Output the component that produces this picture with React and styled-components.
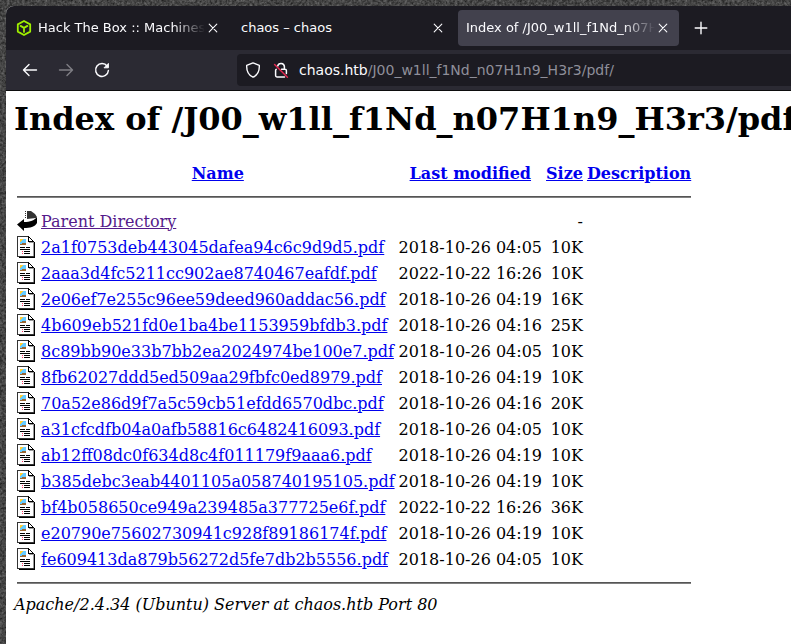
import React from "react";
import styled, { createGlobalStyle } from "styled-components";

const grain =
  "url(\"data:image/svg+xml,%3Csvg xmlns='http://www.w3.org/2000/svg' width='800' height='650'%3E%3Cfilter id='n' x='0' y='0' width='100%25' height='100%25' color-interpolation-filters='sRGB'%3E%3CfeTurbulence type='fractalNoise' baseFrequency='0.4' numOctaves='3' seed='4'/%3E%3CfeColorMatrix values='.4 0 0 0 .07 .4 0 0 0 .07 .4 0 0 0 .07 0 0 0 0 1'/%3E%3C/filter%3E%3Crect width='800' height='650' filter='url(%23n)'/%3E%3C/svg%3E\")";

const GlobalStyle = createGlobalStyle`
  *, *::before, *::after { box-sizing: border-box; }
  body { margin: 0; background: #464646 ${grain}; }
`;

const Desktop = styled.div`
  display: flex;
  min-height: 100vh;
  padding: 6px 0 0 6px;
  overflow: hidden;
`;

const Browser = styled.div`
  flex: 1;
  min-width: 0;
  display: flex;
  flex-direction: column;
  border-top-left-radius: 8px;
  overflow: hidden;
  background: #fff;
  color: #fbfbfe;
  font-family: "DejaVu Sans", sans-serif;
`;

const TabStrip = styled.div`
  display: flex;
  align-items: center;
  height: 44px;
  gap: 4px;
  padding-left: 2px;
  background: #1c1b22;
`;

const Tab = styled.div`
  display: flex;
  align-items: center;
  width: 221px;
  height: 36px;
  padding: 0 8px;
  border-radius: 4px;
  background: ${(p) => (p.$active ? "#42414d" : "transparent")};
`;

const TabLabel = styled.button`
  flex: 1;
  min-width: 0;
  display: flex;
  align-items: center;
  gap: 6px;
  height: 100%;
  padding: 0;
  border: 0;
  background: none;
  color: inherit;
  font: 13px/20px "DejaVu Sans", sans-serif;
  text-align: left;
  white-space: nowrap;
  overflow: hidden;
  mask-image: ${(p) =>
    p.$fade ? "linear-gradient(to left, transparent, #000 32px)" : "none"};
`;

const IconButton = styled.button`
  display: grid;
  place-items: center;
  flex: none;
  width: ${(p) => p.$size}px;
  height: ${(p) => p.$size}px;
  padding: 0;
  border: 0;
  background: none;
  color: inherit;

  &:disabled { opacity: 0.4; }
`;

const Toolbar = styled.div`
  display: flex;
  align-items: center;
  height: 41px;
  padding-left: 6px;
  border-bottom: 1px solid #0c0c0d;
  background: #2b2a33;
`;

const NavButtons = styled.div`
  display: flex;
  flex: none;
  width: 225px;
`;

const AddressBar = styled.div`
  flex: 1;
  min-width: 0;
  display: flex;
  align-items: center;
  height: 32px;
  padding-left: 2px;
  border-radius: 4px 0 0 4px;
  background: #1c1b22;
`;

const Url = styled.a`
  padding-left: 4px;
  color: #8f8f9a;
  font-size: 14px;
  line-height: 20px;
  text-decoration: none;
  white-space: nowrap;
`;

const Host = styled.span`
  color: #fbfbfe;
`;

const Page = styled.main`
  flex: 1;
  padding: 8px;
  overflow: hidden;
  color: #000;
  font: 16px/19px "DejaVu Serif", serif;
`;

const Title = styled.h1`
  margin: 0 0 19px;
  font-size: 32px;
  line-height: 41px;
  white-space: nowrap;
`;

const Listing = styled.table`
  border-spacing: 2px;
  white-space: nowrap;
`;

const Cell = styled.td`
  height: ${(p) => (p.$rule ? "auto" : "24px")};
  padding: 1px;
  text-align: ${(p) => (p.$end ? "right" : "left")};
  line-height: ${(p) => (p.$rule ? 0 : "19px")};
`;

const HeadCell = styled.th`
  height: 24px;
  padding: 1px;
`;

const Rule = styled.hr`
  height: 2px;
  margin: 8px 0;
  border: 0;
  border-top: 1px solid #555;
  border-bottom: 1px solid #808080;
`;

const Link = styled.a`
  color: ${(p) => (p.$visited ? "#551a8b" : "#0000ee")};
  text-decoration: underline;
`;

const Footer = styled.address`
  font-style: italic;
`;

const Glyph = styled.svg`
  display: block;
  flex: none;
`;

const CubeIcon = () => (
  <Glyph width="16" height="16" viewBox="0 0 16 16" fill="none" stroke="#9fef00" strokeWidth="1.8" strokeLinejoin="round" strokeLinecap="round">
    <path d="M8 1 14.200 4.400v7.200L8 15l-6.200-3.400V4.400zM4.600 5.900 8 7.900l3.400-2M8 7.900v4" />
  </Glyph>
);

const CloseIcon = () => (
  <Glyph width="10" height="10" viewBox="0 0 10 10" stroke="currentColor" strokeWidth="1.1" strokeLinecap="round">
    <path d="m1.200 1.200 7.600 7.600m0-7.600L1.200 8.800" />
  </Glyph>
);

const PlusIcon = () => (
  <Glyph width="14" height="14" viewBox="0 0 14 14" stroke="currentColor" strokeWidth="1.4" strokeLinecap="round">
    <path d="M7 1.200v11.600M1.200 7h11.600" />
  </Glyph>
);

const ArrowIcon = ({ forward }) => (
  <Glyph width="16" height="16" viewBox="0 0 16 16" fill="none" stroke="currentColor" strokeWidth="1.4" strokeLinecap="round" strokeLinejoin="round">
    <path d={forward ? "M1.500 8h13M9 2.500 14.500 8 9 13.500" : "M14.500 8h-13M7 2.500 1.500 8 7 13.500"} />
  </Glyph>
);

const ReloadIcon = () => (
  <Glyph width="16" height="16" viewBox="0 0 16 16" fill="none" stroke="currentColor" strokeWidth="1.5" strokeLinecap="round">
    <path d="M13.200 4.200A6.400 6.400 0 1 0 14.400 8.500" />
    <path d="M14.400 1.800v4H10.400z" fill="currentColor" strokeWidth="1" strokeLinejoin="round" />
  </Glyph>
);

const ShieldIcon = () => (
  <Glyph width="16" height="16" viewBox="0 0 16 16" fill="none" stroke="currentColor" strokeWidth="1.4" strokeLinejoin="round">
    <path d="M8 .9 14.300 3.400c.3 5.800-1.600 9.600-6.300 11.800C3.300 13 1.400 9.200 1.700 3.400z" />
  </Glyph>
);

const InsecureIcon = () => (
  <Glyph width="16" height="16" viewBox="0 0 16 16" fill="none" stroke="currentColor" strokeWidth="1.5" strokeLinecap="round">
    <path d="M4.700 4a3.400 3.400 0 0 1 6.700.6V7.300M8.500 7.300h3.600a1.300 1.300 0 0 1 1.300 1.300v3M3.200 7.400a1.300 1.300 0 0 0-.6 1.200v5a1.300 1.300 0 0 0 1.300 1.300h7.600" />
    <path d="M1.600 2.500 14.400 15.200" stroke="#e22850" />
  </Glyph>
);

const DocumentIcon = () => (
  <Glyph width="20" height="22" viewBox="0 0 20 22" shapeRendering="crispEdges" role="img" aria-label="PDF document">
    <path fill="#fff" d="M1 1h11v4h5v15H1z" />
    <path fill="#333" d="M0 0h12v1H0zM0 0h1v21H0zM0 20h17v1H0z" />
    <path fill="#000" d="M2 21h16v1H2zM17 6h1v16h-1zM11 0h1v6h-1zM11 5h6v1h-6zM12 1h1v1h-1zM13 2h1v1h-1zM14 3h1v1h-1zM15 4h1v1h-1zM3 11h5v1H3zM9 11h4v1H9zM3 13h10v1H3zM7 15h6v1H7zM7 17h6v1H7zM5 15h1v1H5zM5 17h1v1H5z" />
    <path fill="#999" d="M12 6h5v1h-5zM16 7h1v13h-1z" />
    <path fill="#996633" d="M3 3h6v6H3z" />
    <path fill="#66ccff" d="M4 4h5v3H4z" />
    <path fill="#ffcc33" d="M3 3h3v1H5v1H4v1H3z" />
    <path fill="#66ccff" d="M6 3h3v4H6zM3 6h2v2H3z" />
    <path fill="#ff3366" d="M5 15h1v1H5zM5 17h1v1H5z" />
  </Glyph>
);

const BackIcon = () => (
  <Glyph width="20" height="22" viewBox="0 0 20 22" role="img" aria-label="Parent directory">
    <path fill="none" stroke="#333" strokeDasharray="1 1" d="M8.500 1v8" />
    <path fill="#333" d="M10 1h4l4 3 2 3-1 1-9 1z" />
    <path fill="#000" d="M0 14.500 7 9v3c6 0 11-2 13-5v6c-2 4-7 5-13 5v3z" />
  </Glyph>
);

const files = [
  ["2a1f0753deb443045dafea94c6c9d9d5.pdf", "2018-10-26 04:05", "10K"],
  ["2aaa3d4fc5211cc902ae8740467eafdf.pdf", "2022-10-22 16:26", "10K"],
  ["2e06ef7e255c96ee59deed960addac56.pdf", "2018-10-26 04:19", "16K"],
  ["4b609eb521fd0e1ba4be1153959bfdb3.pdf", "2018-10-26 04:16", "25K"],
  ["8c89bb90e33b7bb2ea2024974be100e7.pdf", "2018-10-26 04:05", "10K"],
  ["8fb62027ddd5ed509aa29fbfc0ed8979.pdf", "2018-10-26 04:19", "10K"],
  ["70a52e86d9f7a5c59cb51efdd6570dbc.pdf", "2018-10-26 04:16", "20K"],
  ["a31cfcdfb04a0afb58816c6482416093.pdf", "2018-10-26 04:05", "10K"],
  ["ab12ff08dc0f634d8c4f011179f9aaa6.pdf", "2018-10-26 04:19", "10K"],
  ["b385debc3eab4401105a058740195105.pdf", "2018-10-26 04:19", "10K"],
  ["bf4b058650ce949a239485a377725e6f.pdf", "2022-10-22 16:26", "36K"],
  ["e20790e75602730941c928f89186174f.pdf", "2018-10-26 04:19", "10K"],
  ["fe609413da879b56272d5fe7db2b5556.pdf", "2018-10-26 04:05", "10K"],
];

const tabs = [
  { label: "Hack The Box :: Machines", icon: <CubeIcon />, fade: true },
  { label: "chaos – chaos" },
  { label: "Index of /J00_w1ll_f1Nd_n07H1n9_H3r3/pdf", fade: true, active: true },
];

const RuleRow = () => (
  <tr>
    <Cell colSpan={5} $rule><Rule /></Cell>
  </tr>
);

export default function App() {
  return (
    <Desktop>
      <GlobalStyle />
      <Browser>
        <TabStrip>
          {tabs.map((t) => (
            <Tab key={t.label} $active={t.active}>
              <TabLabel $fade={t.fade}>{t.icon}<span>{t.label}</span></TabLabel>
              <IconButton $size={16} aria-label={`Close ${t.label}`}><CloseIcon /></IconButton>
            </Tab>
          ))}
          <IconButton $size={36} aria-label="New tab"><PlusIcon /></IconButton>
        </TabStrip>
        <Toolbar>
          <NavButtons>
            <IconButton $size={36} aria-label="Back"><ArrowIcon /></IconButton>
            <IconButton $size={36} aria-label="Forward" disabled><ArrowIcon forward /></IconButton>
            <IconButton $size={36} aria-label="Reload"><ReloadIcon /></IconButton>
          </NavButtons>
          <AddressBar>
            <IconButton $size={28} aria-label="Tracking protection"><ShieldIcon /></IconButton>
            <IconButton $size={28} aria-label="Connection not secure"><InsecureIcon /></IconButton>
            <Url href="#"><Host>chaos.htb</Host>/J00_w1ll_f1Nd_n07H1n9_H3r3/pdf/</Url>
          </AddressBar>
        </Toolbar>
        <Page>
          <Title>Index of /J00_w1ll_f1Nd_n07H1n9_H3r3/pdf</Title>
          <Listing>
            <thead>
              <tr>
                <HeadCell />
                {["Name", "Last modified", "Size", "Description"].map((h) => (
                  <HeadCell key={h} scope="col"><Link href="#">{h}</Link></HeadCell>
                ))}
              </tr>
            </thead>
            <tbody>
              <RuleRow />
              <tr>
                <Cell><BackIcon /></Cell>
                <Cell><Link href="#" $visited>Parent Directory</Link></Cell>
                <Cell />
                <Cell $end>-</Cell>
                <Cell />
              </tr>
              {files.map(([name, date, size]) => (
                <tr key={name}>
                  <Cell><DocumentIcon /></Cell>
                  <Cell><Link href="#">{name}</Link></Cell>
                  <Cell $end>{date}</Cell>
                  <Cell $end>{size}</Cell>
                  <Cell />
                </tr>
              ))}
              <RuleRow />
            </tbody>
          </Listing>
          <Footer>Apache/2.4.34 (Ubuntu) Server at chaos.htb Port 80</Footer>
        </Page>
      </Browser>
    </Desktop>
  );
}
